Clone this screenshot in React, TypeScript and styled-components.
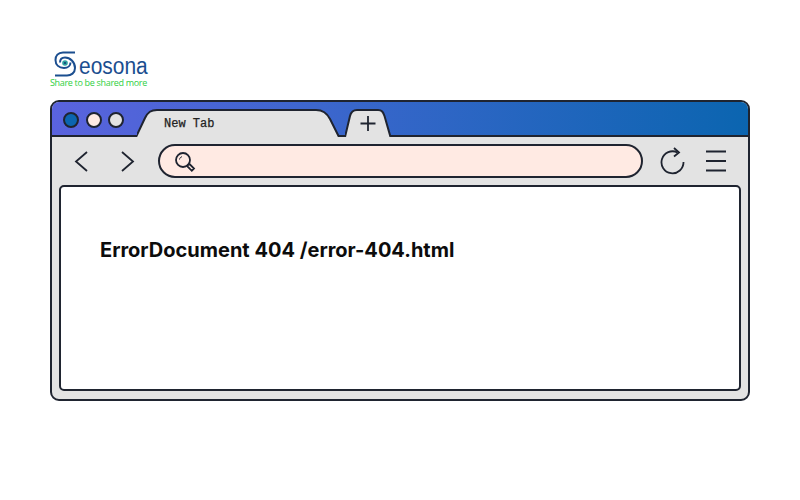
import styled, { createGlobalStyle } from "styled-components"

const GlobalStyle = createGlobalStyle`
    html, body {
        margin: 0;
        padding: 0;
        background: #fff;
    }
`
const Page = styled.div`
    width: 800px;
    height: 500px;
    box-sizing: border-box;
    padding: 50px 50px 0 50px;
    overflow: hidden;
`
const Logo = styled.div`
    height: 38px;
    margin-bottom: 12px;
    display: flex;
    flex-direction: column;
`
const LogoRow = styled.div`
    display: flex;
    align-items: flex-end;
    height: 27px;
    padding-left: 4px;
`
const LogoName = styled.span`
    font-family: "Liberation Sans", sans-serif;
    font-size: 23px;
    line-height: 22px;
    color: #1b4e8f;
    margin-left: 2px;
    transform: scaleX(0.91);
    transform-origin: left;
`
const Slogan = styled.span`
    font-family: "Open Sans", sans-serif;
    font-size: 9px;
    font-weight: 500;
    line-height: 11px;
    letter-spacing: -0.32px;
    color: #2fd03f;
    white-space: nowrap;
`
const BrowserWindow = styled.div`
    width: 700px;
    height: 301px;
    box-sizing: border-box;
    border: 2px solid #1f2430;
    border-radius: 9px;
    background: #e3e3e3;
    display: flex;
    flex-direction: column;
    overflow: hidden;
`
const TitleBar = styled.div`
    height: 35px;
    flex: none;
    box-sizing: border-box;
    border-bottom: 2px solid #1f2430;
    background: linear-gradient(90deg, #5a63de 0%, #3f66cf 35%, #0b65b0 100%);
    display: flex;
    align-items: flex-end;
    padding-left: 11px;
`
const Dots = styled.div`
    display: flex;
    gap: 6.500px;
    align-self: center;
    margin-top: 3px;
    margin-right: 13px;
`
const Dot = styled.span<{ $color: string }>`
    width: 16px;
    height: 16px;
    box-sizing: border-box;
    border: 2px solid #1f2430;
    border-radius: 50%;
    background: ${({ $color }) => $color};
`
const Tab = styled.div`
    position: relative;
    width: 206px;
    height: 28px;
    margin-bottom: -2px;
    flex: none;
`
const TabLabel = styled.span`
    position: absolute;
    left: 27px;
    top: 8px;
    font-family: "Liberation Mono", monospace;
    font-size: 12px;
    line-height: 14px;
    color: #222;
    -webkit-text-stroke: 0.25px #222;
`
const TabShape = styled.svg`
    position: absolute;
    left: 0;
    top: 0;
    display: block;
`
const NewTab = styled.svg`
    display: block;
    flex: none;
    margin-left: 2px;
    margin-bottom: -2px;
`
const Toolbar = styled.div`
    height: 48px;
    flex: none;
    display: flex;
    align-items: center;
    padding: 0 22px 0 20px;
`
const NavIcon = styled.svg`
    display: block;
    flex: none;
`
const NavGroup = styled.div`
    display: flex;
    gap: 26px;
    margin-right: 20px;
`
const AddressBar = styled.div`
    width: 485px;
    height: 34px;
    flex: none;
    box-sizing: border-box;
    border: 2px solid #1f2430;
    border-radius: 17px;
    background: #ffeae3;
    display: flex;
    align-items: center;
    padding-left: 15px;
`
const SearchIcon = styled.svg`
    display: block;
    margin-top: 3px;
`
const ToolIcons = styled.div`
    display: flex;
    align-items: center;
    gap: 19px;
    margin-left: 17px;
`
const Content = styled.div`
    flex: 1;
    margin: 0 7px 8px 7px;
    box-sizing: border-box;
    border: 2px solid #1f2430;
    border-radius: 5px;
    background: #fff;
    padding: 51px 0 0 39px;
`
const Message = styled.div`
    font-family: Inter, sans-serif;
    font-size: 20px;
    font-weight: 700;
    line-height: 24px;
    color: #0c0c0c;
`

const stroke = "#1f2430"

export default function App() {
    return (
        <Page>
            <GlobalStyle />
            <Logo>
                <LogoRow>
                    <svg width="23" height="26" viewBox="0 0 23 26" fill="none">
                        <path d="M21 1.500 H9 C4 1.500 1.500 5 1.500 9 C1.500 14 5 17 10 17 C14 17 16.500 14.500 16.500 11.500" stroke="#1b4e8f" strokeWidth="2" />
                        <path d="M6 11.500 C6 8 8.500 6.500 11 6.500 C16 6.500 21 11 21 17 C21 22 17 24.500 13 24.500 H1" stroke="#1b4e8f" strokeWidth="2" />
                        <circle cx="11" cy="12" r="2.800" fill="#2fa3a0" />
                        <circle cx="11" cy="12" r="1.100" fill="#123f78" />
                    </svg>
                    <LogoName>eosona</LogoName>
                </LogoRow>
                <Slogan>Share to be shared more</Slogan>
            </Logo>
            <BrowserWindow>
                <TitleBar>
                    <Dots>
                        <Dot $color="#0b65b0" />
                        <Dot $color="#ffeae3" />
                        <Dot $color="#e3e3e3" />
                    </Dots>
                    <Tab>
                        <TabShape width="206" height="28" viewBox="0 0 206 28" fill="none">
                            <path d="M-1 28 L8 9 C11 3 14 1 20 1 H179 C186 1 190 4 193 10 L202 28" fill="#e3e3e3" stroke={stroke} strokeWidth="2" />
                        </TabShape>
                        <TabLabel>New Tab</TabLabel>
                    </Tab>
                    <NewTab width="46" height="28" viewBox="0 0 46 28" fill="none">
                        <path d="M0 28 L5 7 C6 3 8 1 12 1 H33 C37 1 38 3 39.500 7 L45.500 28" fill="#e3e3e3" stroke={stroke} strokeWidth="2" />
                        <path d="M23 7 V22 M15.500 14.500 H30.500" stroke={stroke} strokeWidth="1.800" />
                    </NewTab>
                </TitleBar>
                <Toolbar>
                    <NavGroup>
                        <NavIcon width="20" height="24" viewBox="0 0 20 24" fill="none">
                            <path d="M15 3 L4 12.500 L15 22" stroke={stroke} strokeWidth="1.800" />
                        </NavIcon>
                        <NavIcon width="20" height="24" viewBox="0 0 20 24" fill="none">
                            <path d="M4 3 L15 12.500 L4 22" stroke={stroke} strokeWidth="1.800" />
                        </NavIcon>
                    </NavGroup>
                    <AddressBar>
                        <SearchIcon width="22" height="22" viewBox="0 0 22 22" fill="none">
                            <circle cx="8" cy="8" r="7" stroke={stroke} strokeWidth="1.800" />
                            <path d="M4.500 7.500 C4.700 6 5.700 5 7 4.700" stroke={stroke} strokeWidth="1" />
                            <path d="M13 12.800 L14.800 12.300 L19 16.500 L16.800 18.800 L12.500 14.500 Z" fill="#ffeae3" stroke={stroke} strokeWidth="1.800" />
                        </SearchIcon>
                    </AddressBar>
                    <ToolIcons>
                        <NavIcon width="26" height="28" viewBox="0 0 26 28" fill="none">
                            <path d="M17.500 5.500 A11 11 0 1 0 23.500 15" stroke={stroke} strokeWidth="1.800" />
                            <path d="M14 1 L19 5.500 L14 9.500" stroke={stroke} strokeWidth="1.800" />
                        </NavIcon>
                        <NavIcon width="22" height="22" viewBox="0 0 22 22" fill="none">
                            <path d="M1 1.500 H21 M1 11 H21 M1 20.500 H21" stroke={stroke} strokeWidth="1.800" />
                        </NavIcon>
                    </ToolIcons>
                </Toolbar>
                <Content>
                    <Message>ErrorDocument 404 /error-404.html</Message>
                </Content>
            </BrowserWindow>
        </Page>
    )
}
